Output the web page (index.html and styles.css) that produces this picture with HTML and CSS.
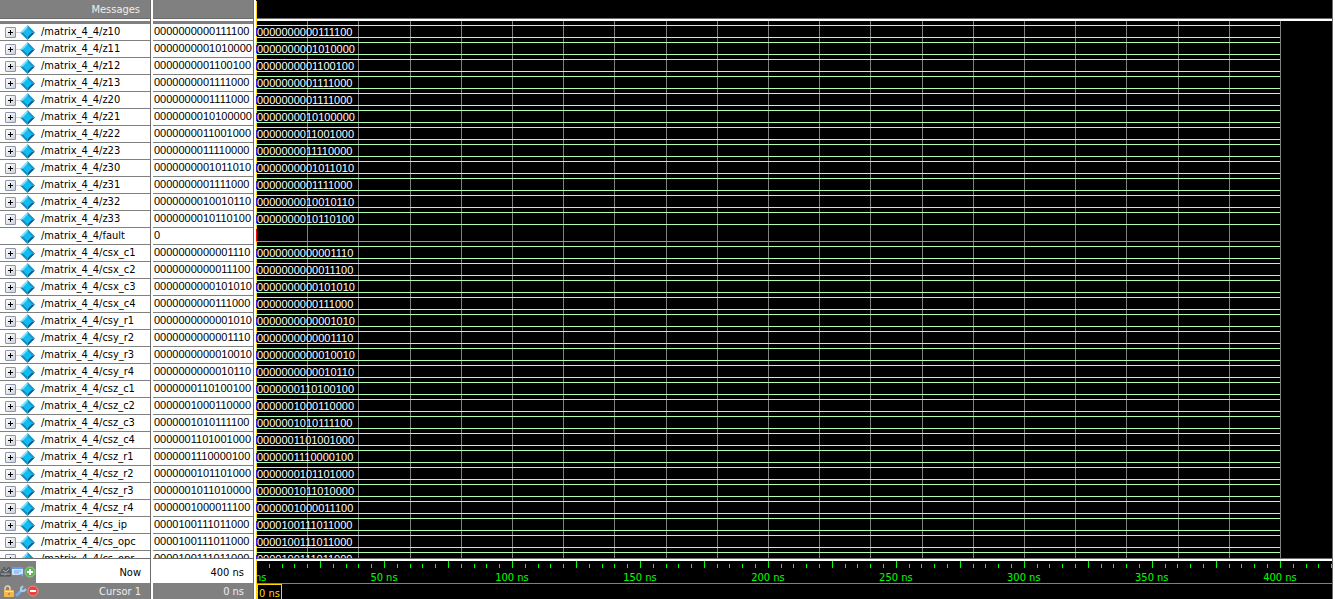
FILE: index.html
```html
<!DOCTYPE html>
<html lang="en">
<head>
<meta charset="utf-8">
<title>Wave</title>
<link rel="stylesheet" href="styles.css">
</head>
<body>
<svg class="defs" aria-hidden="true">
  <symbol id="signal" viewBox="0 0 16 16">
    <path d="M8 0 0 8h8z" fill="#7fe0fb"/>
    <path d="M8 0l8 8H8z" fill="#1c94c8"/>
    <path d="M0 8l8 8V8z" fill="#1688bd"/>
    <path d="M16 8l-8 8V8z" fill="#045c8c"/>
    <path d="M8 3 13 8 8 13 3 8z" fill="#10bdf2"/>
  </symbol>
</svg>
<main class="viewer">
  <section class="pane names">
    <header class="head">Messages</header>
    <div class="rows" id="names"></div>
    <div class="now">
      <span class="tools">
        <button type="button" aria-label="Find edge"><svg viewBox="0 0 12 12"><path d="M0 10V7l2-4h1V1h2v2h1l2-2h2l1 4v5H7L5 8 3 10z" fill="#595e63"/><path d="M1 8h9M3 4l3 2 3-3" stroke="#aab4bb" fill="none"/><path d="M0 10h11" stroke="#45494e"/></svg></button>
        <button type="button" aria-label="Edit grid"><svg viewBox="0 0 12 12"><rect x="0" y="1" width="11" height="8" rx="1" fill="#cfe2fb"/><path d="M0 2h11" stroke="#5b9bea" stroke-width="2"/><path d="M2 5h7M2 7h5" stroke="#72a6e4"/><path d="M6 8h5v3L9 9z" fill="#77a9e2"/></svg></button>
        <button type="button" aria-label="Add cursor"><svg viewBox="0 0 12 12"><circle cx="6" cy="6" r="5" fill="#5bb553" stroke="#91d389"/><path d="M6 3v6M3 6h6" stroke="#fff" stroke-width="2"/></svg></button>
      </span>
      <span class="label">Now</span>
    </div>
    <div class="cursor">
      <span class="tools">
        <button type="button" aria-label="Lock cursor"><svg viewBox="0 0 12 12"><path d="M2 6V3.500a2.500 2.500 0 0 1 5 0V5" fill="none" stroke="#e2d4b5" stroke-width="1.500"/><rect x="1" y="5" width="10" height="7" rx="1" fill="#f0b84d"/><path d="M2 6.500h8" stroke="#ffe19b"/><path d="M6 8v2" stroke="#c58a35" stroke-width="2"/></svg></button>
        <button type="button" aria-label="Cursor properties"><svg viewBox="0 0 12 12"><path d="M2 10 7 5" stroke="#75a9ea" stroke-width="3" stroke-linecap="round"/><path d="M8 1 6 3v3h3l2-2" fill="none" stroke="#a9caf0" stroke-width="2"/></svg></button>
        <button type="button" aria-label="Delete cursor"><svg viewBox="0 0 12 12"><circle cx="6" cy="6" r="5" fill="#e5463d" stroke="#f18b84"/><path d="M3 6h6" stroke="#fff" stroke-width="2"/></svg></button>
      </span>
      <span class="label">Cursor 1</span>
    </div>
  </section>
  <section class="pane values">
    <header class="head"></header>
    <div class="rows" id="values"></div>
    <div class="now"><span class="label">400 ns</span></div>
    <div class="cursor"><span class="label">0 ns</span></div>
  </section>
  <section class="pane wave">
    <header class="head"></header>
    <div class="plot">
      <div class="scale grid" id="grid"></div>
      <div class="traces" id="traces"></div>
    </div>
    <div class="now scale" id="ruler"></div>
    <div class="cursor"><span class="time">0 ns</span></div>
    <div class="marker"></div>
  </section>
</main>
<script src="wave.js"></script>
</body>
</html>
```
FILE: styles.css
```css
* { box-sizing: border-box; }
body {
  margin: 0;
  background: #fff;
  color: #000;
  font-family: "DejaVu Sans Condensed", Tahoma, "Noto Sans", sans-serif;
  font-size: 11px;
  line-height: 16px;
}
.defs { position: absolute; width: 0; height: 0; }
.viewer { display: flex; gap: 2px; height: 100vh; }
.pane { display: flex; flex-direction: column; border-right: 1px solid #6c6c6c; min-width: 0; }
.names { flex: 0 0 151px; }
.values { flex: 0 0 101px; }
.wave { flex: 1; position: relative; overflow: hidden; margin-right: 2px; }
.head {
  flex: none;
  height: 19px;
  padding: 2px 10px 0 0;
  background: #808080;
  border-bottom: 1px solid #6c6c6c;
  color: #eee;
  text-align: right;
}
.rows {
  flex: 1;
  min-height: 0;
  overflow: hidden;
  margin: 2px 0;
  border-top: 3px solid #808080;
  border-bottom: 1px solid #6c6c6c;
}
.row { display: flex; align-items: center; height: 17px; border-bottom: 1px solid #808080; white-space: nowrap; }
.names .row { padding-left: 5px; }
.values .row { padding: 0 0 2px 1px; }
.values .row, .bus { font-family: "Liberation Sans", Arial, sans-serif; }
.branch { display: flex; align-items: center; width: 15px; height: 16px; }
.branch::after { content: ""; width: 4px; height: 1px; background: #d4d4d4; }
.branch:empty::after { display: none; }
.expand {
  width: 11px;
  height: 11px;
  padding: 0;
  border: 1px solid #8b95a5;
  border-radius: 1px;
  background: linear-gradient(135deg, #fff, #ccd1dc);
  display: grid;
  place-items: center;
}
.expand svg { display: block; width: 9px; height: 9px; }
.signal { width: 15px; height: 15px; margin-right: 6px; }
.now { flex: none; display: flex; align-items: center; height: 22px; }
.cursor { flex: none; display: flex; align-items: center; height: 16px; background: #808080; color: #eee; }
.label { margin-left: auto; padding: 2px 9px 0 0; }
.tools { display: flex; align-items: center; align-self: stretch; background: #808080; }
.cursor .tools { padding-left: 3px; }
.tools button { width: 12px; height: 12px; padding: 0; border: 0; background: none; }
.tools svg { display: block; width: 12px; height: 12px; }

.wave .head { background: #000; }
.plot {
  flex: 1;
  min-height: 0;
  position: relative;
  overflow: hidden;
  margin: 2px 0;
  padding-top: 3px;
  background: #000;
  border-bottom: 1px solid #6c6c6c;
}
.scale { display: grid; grid-template-columns: 1024fr 52fr; }
.grid { position: absolute; inset: 0; }
.steps { display: flex; }
.steps > i { flex: 1; border-left: 1px solid #808080; }
.steps > i:first-child { border-color: transparent; }
.rest { border-left: 1px solid #808080; }
.traces { position: relative; z-index: 1; display: grid; grid-template-columns: 1024fr 52fr; }
.trace { grid-column: 1; height: 17px; padding-top: 1px; }
.bus { height: 13px; border-top: 1px solid #b0ffb0; border-bottom: 1px solid #b0ffb0; color: #fff; line-height: 12px; padding-left: 1px; white-space: nowrap; }
.bit { height: 13px; border-bottom: 1px solid #0f0; }
.bit::before { content: ""; display: block; width: 1px; height: 12px; background: #f00; }
.wave .now { background: #000; color: #0f0; align-items: start; }
.ticks { display: flex; }
.ticks i { flex: 1 0 0; position: relative; height: 22px; font-style: normal; }
.ticks i::before { content: ""; display: block; width: 1px; height: 4px; margin-top: 3px; background: #0f0; }
.ticks i.major::before { height: 7px; margin-top: 0; }
.ticks i.end { flex: 0 0 1px; }
.ticks span { position: absolute; left: 0; top: 9px; transform: translateX(-50%); white-space: nowrap; }
.wave .cursor { background: #000; border-top: 1px solid #808080; align-items: stretch; }
.time { margin-left: 1px; padding: 0 1px; border: 1px solid #ffd700; border-bottom: 0; color: #ffd700; line-height: 18px; }
.marker { position: absolute; left: 0; top: 1px; bottom: 0; width: 1px; background: #ffd700; }
.marker::after {
  content: "";
  position: absolute;
  inset: 23px 0 40px;
  background: repeating-linear-gradient(#ffd700 0 4px, #3a20d0 4px 12px, #ffd700 12px 17px);
}
```
FILE: wave.js
```js
const signals = [
  ["z10", "0000000000111100"], ["z11", "0000000001010000"], ["z12", "0000000001100100"],
  ["z13", "0000000001111000"], ["z20", "0000000001111000"], ["z21", "0000000010100000"],
  ["z22", "0000000011001000"], ["z23", "0000000011110000"], ["z30", "0000000001011010"],
  ["z31", "0000000001111000"], ["z32", "0000000010010110"], ["z33", "0000000010110100"],
  ["fault", "0"],
  ["csx_c1", "0000000000001110"], ["csx_c2", "0000000000011100"], ["csx_c3", "0000000000101010"],
  ["csx_c4", "0000000000111000"], ["csy_r1", "0000000000001010"], ["csy_r2", "0000000000001110"],
  ["csy_r3", "0000000000010010"], ["csy_r4", "0000000000010110"], ["csz_c1", "0000000110100100"],
  ["csz_c2", "0000001000110000"], ["csz_c3", "0000001010111100"], ["csz_c4", "0000001101001000"],
  ["csz_r1", "0000001110000100"], ["csz_r2", "0000000101101000"], ["csz_r3", "0000001011010000"],
  ["csz_r4", "0000001000011100"], ["cs_ip", "0000100111011000"], ["cs_opc", "0000100111011000"],
  ["cs_opr", "0000100111011000"]
];
const put = (id, html) => { document.getElementById(id).innerHTML = html; };
const plus = '<svg viewBox="0 0 9 9"><path d="M2 4.500h5M4.500 2v5" stroke="#000"/></svg>';

put("names", signals.map(([name, value]) => {
  const button = value.length > 1
    ? `<button class="expand" type="button" aria-label="Expand ${name}">${plus}</button>` : "";
  return `<div class="row"><span class="branch">${button}</span><svg class="signal"><use href="#signal"/></svg>/matrix_4_4/${name}</div>`;
}).join(""));
put("values", signals.map(s => `<div class="row">${s[1]}</div>`).join(""));
put("traces", signals.map(([, value]) =>
  `<div class="trace">${value.length > 1 ? `<div class="bus">${value}</div>` : '<div class="bit"></div>'}</div>`
).join(""));

// One grid line every 20 ns, one ruler tick every 5 ns.
put("grid", `<div class="steps">${"<i></i>".repeat(20)}</div><div class="rest"></div>`);
const tick = n => `<i class="${n % 5 ? "" : "major"}">${n % 10 ? "" : `<span>${n * 5} ns</span>`}</i>`;
const ticks = (from, to) => {
  let out = "";
  for (let n = from; n < to; n++) out += tick(n);
  return out;
};
put("ruler", `<div class="ticks">${ticks(0, 80)}</div><div class="ticks">${ticks(80, 84)}<i class="end"></i></div>`);
```
